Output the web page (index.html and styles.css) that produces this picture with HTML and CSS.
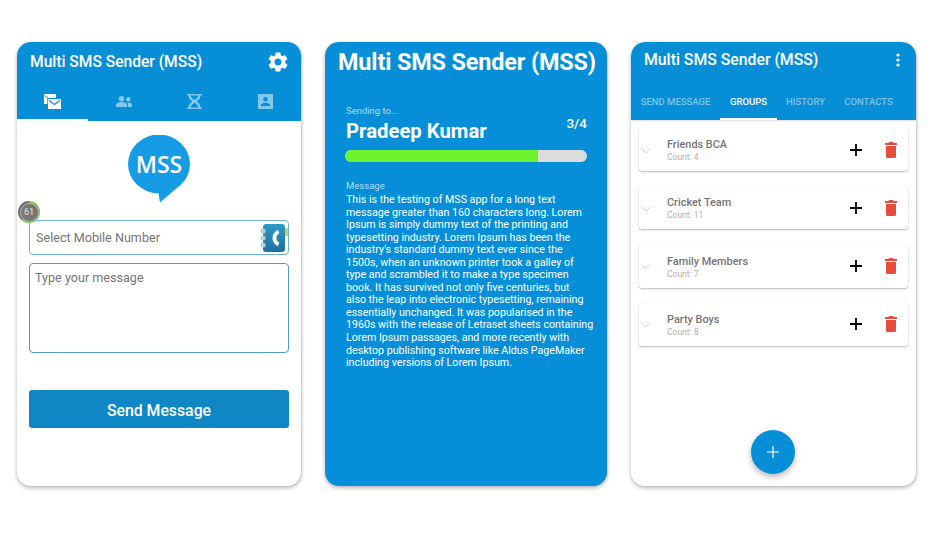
FILE: index.html
```html
<!DOCTYPE html>
<html lang="en">
<head>
<meta charset="utf-8">
<title>Multi SMS Sender (MSS)</title>
<link rel="stylesheet" href="styles.css">
</head>
<body>
<main class="shots">
  <section class="card card-send">
    <header class="appbar appbar-send">
      <div class="titlebar titlebar-send">
        <h1 class="title">Multi SMS Sender (MSS)</h1>
        <svg class="gear" viewBox="2 2 20 20" width="20" height="20"><path fill="#fff" d="M19.14 12.94c.04-.3.06-.61.06-.94 0-.32-.02-.64-.07-.94l2.03-1.58a.49.49 0 0 0 .12-.61l-1.92-3.32a.49.49 0 0 0-.59-.22l-2.39.96c-.5-.38-1.03-.7-1.62-.94l-.36-2.54a.48.48 0 0 0-.48-.41h-3.84c-.24 0-.43.17-.47.41l-.36 2.54c-.59.24-1.13.57-1.62.94l-2.39-.96c-.22-.08-.47 0-.59.22L2.74 8.87c-.12.21-.08.47.12.61l2.03 1.58c-.05.3-.09.63-.09.94s.02.64.07.94l-2.03 1.58a.49.49 0 0 0-.12.61l1.92 3.32c.12.22.37.29.59.22l2.39-.96c.5.38 1.03.7 1.62.94l.36 2.54c.05.24.24.41.48.41h3.84c.24 0 .44-.17.47-.41l.36-2.54c.59-.24 1.13-.56 1.62-.94l2.39.96c.22.08.47 0 .59-.22l1.92-3.32c.12-.22.07-.47-.12-.61l-2.01-1.58zM12 15.6c-1.98 0-3.6-1.62-3.6-3.6s1.62-3.6 3.6-3.6 3.6 1.62 3.6 3.6-1.62 3.6-3.6 3.6z"/></svg>
      </div>
      <nav class="icontabs">
        <div class="icontab icontab-active">
          <svg viewBox="0 0 17 15" width="17" height="15"><path fill="#fff" d="M0 0h12v4.500H4V10H0z"/><path fill="none" stroke="#068fd6" stroke-width="1" d="M.5 1.500 6 5.500"/><path fill="#068fd6" d="M3.300 4h9.700v7H3.300z"/><path fill="#fff" d="M4 5h13v10H4z"/><path fill="none" stroke="#068fd6" stroke-width="1.200" d="M5 6.500l5.500 4 5.500-4"/></svg>
        </div>
        <div class="icontab">
          <svg viewBox="0 0 16 11" width="16" height="11"><g fill="#80c8ee"><circle cx="5.500" cy="2.700" r="2.700"/><path d="M0 11V9c0-2 2.700-3 5.500-3S11 7 11 9v2z"/><circle cx="12.300" cy="3.300" r="2.200"/><path d="M12 6.500c2 0 4 .8 4 2.500v2h-4V9c0-1-.3-1.800-.8-2.400z"/></g></svg>
        </div>
        <div class="icontab">
          <svg viewBox="0 0 15 15" width="15" height="15"><path fill="#80c8ee" d="M0 0h15v1.500h-1.500c0 2.500-1.500 4.700-3.800 6 2.300 1.300 3.800 3.500 3.800 6H15V15H0v-1.500h1.500c0-2.500 1.500-4.700 3.800-6-2.300-1.300-3.800-3.500-3.800-6H0zM3.500 1.500c.5 1.500 2 3.500 4 4.500 2-1 3.500-3 4-4.500zM7.500 9c-2 1-3.300 2.500-3.800 4.500h7.600C10.800 11.500 9.500 10 7.500 9z" fill-rule="evenodd"/></svg>
        </div>
        <div class="icontab">
          <svg viewBox="0 0 15 15" width="15" height="15"><path fill="#80c8ee" fill-rule="evenodd" d="M0 0h15v15H0zM7.500 3a2.300 2.300 0 1 0 0 4.600 2.300 2.300 0 0 0 0-4.600zM3 12h9v-1c0-1.500-3-2.300-4.500-2.300S3 9.500 3 11z"/></svg>
        </div>
      </nav>
    </header>
    <div class="send-body">
      <div class="logo">
        <svg viewBox="0 0 64 70" width="64" height="70"><ellipse cx="31" cy="29" rx="31" ry="29.500" fill="#159ce4"/><path fill="#159ce4" d="M30 55 32 67.500 50 52z"/></svg>
        <span class="logo-text">MSS</span>
      </div>
      <div class="field field-number">
        <span class="placeholder">Select Mobile Number</span>
        <svg class="book" viewBox="0 0 28 30" width="28" height="30"><defs><linearGradient id="bookfill" x1="0" y1="0" x2="0" y2="1"><stop offset="0" stop-color="#2f9ac6"/><stop offset="1" stop-color="#1f6f9f"/></linearGradient></defs><rect x="25" y="5" width="3" height="8" fill="#e8c94a"/><rect x="3" y="1" width="22" height="28" rx="3" fill="url(#bookfill)"/><path fill="#fff" d="M18 7c-3.500 1.300-5.500 4.500-5.500 8s2 6.700 5.500 8l1.300-3.500-2-1.300c-.6-1-.9-2-.9-3.200s.3-2.200.9-3.200l2-1.300z"/><g fill="#b6cfd0"><circle cx="3" cy="8" r="2.600"/><circle cx="3" cy="15" r="2.600"/><circle cx="3" cy="22" r="2.600"/></g></svg>
        <div class="badge"><span>61</span></div>
      </div>
      <div class="field field-message"><span class="placeholder">Type your message</span></div>
      <button class="send-button" type="button">Send Message</button>
    </div>
  </section>

  <section class="card card-progress">
    <h1 class="title title-large">Multi SMS Sender (MSS)</h1>
    <div class="progress-body">
      <div class="recipient-row">
        <div>
          <div class="label">Sending to...</div>
          <div class="recipient">Pradeep Kumar</div>
        </div>
        <div class="counter">3/4</div>
      </div>
      <div class="track"><div class="fill"></div></div>
      <div class="label label-message">Message</div>
      <p class="message">This is the testing of MSS app for a long text<br>message greater than 160 characters long. Lorem<br>Ipsum is simply dummy text of the printing and<br>typesetting industry. Lorem Ipsum has been the<br>industry's standard dummy text ever since the<br>1500s, when an unknown printer took a galley of<br>type and scrambled it to make a type specimen<br>book. It has survived not only five centuries, but<br>also the leap into electronic typesetting, remaining<br>essentially unchanged. It was popularised in the<br>1960s with the release of Letraset sheets containing<br>Lorem Ipsum passages, and more recently with<br>desktop publishing software like Aldus PageMaker<br>including versions of Lorem Ipsum.</p>
    </div>
  </section>

  <section class="card card-groups">
    <header class="appbar appbar-groups">
      <div class="titlebar titlebar-groups">
        <h1 class="title title-groups">Multi SMS Sender (MSS)</h1>
        <svg viewBox="0 0 4 14" width="4" height="14"><g fill="#fff"><circle cx="2" cy="2" r="1.600"/><circle cx="2" cy="7" r="1.600"/><circle cx="2" cy="12" r="1.600"/></g></svg>
      </div>
      <nav class="texttabs">
        <div class="texttab">SEND MESSAGE</div>
        <div class="texttab texttab-active">GROUPS</div>
        <div class="texttab">HISTORY</div>
        <div class="texttab">CONTACTS</div>
      </nav>
    </header>
    <div class="groups">
      <article class="group">
        <svg class="chevron" viewBox="0 0 10 6" width="10" height="6"><path fill="none" stroke="#d4d4d4" d="M.5.5 5 5 9.500.5"/></svg>
        <div class="group-text"><div class="group-name">Friends BCA</div><div class="group-count">Count: 4</div></div>
        <svg class="plus" viewBox="0 0 12 12" width="12" height="12"><path stroke="#000" stroke-width="1.800" d="M6 0v12M0 6h12"/></svg>
        <svg class="trash" viewBox="0 0 12 16" width="12" height="16"><path fill="#e74c3c" d="M4 0h4l.6 1H12v2H0V1h3.400zM1 4h10v10.500a1.500 1.500 0 0 1-1.500 1.500h-7A1.500 1.500 0 0 1 1 14.500z"/></svg>
      </article>
      <article class="group">
        <svg class="chevron" viewBox="0 0 10 6" width="10" height="6"><path fill="none" stroke="#d4d4d4" d="M.5.5 5 5 9.500.5"/></svg>
        <div class="group-text"><div class="group-name">Cricket Team</div><div class="group-count">Count: 11</div></div>
        <svg class="plus" viewBox="0 0 12 12" width="12" height="12"><path stroke="#000" stroke-width="1.800" d="M6 0v12M0 6h12"/></svg>
        <svg class="trash" viewBox="0 0 12 16" width="12" height="16"><path fill="#e74c3c" d="M4 0h4l.6 1H12v2H0V1h3.400zM1 4h10v10.500a1.500 1.500 0 0 1-1.500 1.500h-7A1.500 1.500 0 0 1 1 14.500z"/></svg>
      </article>
      <article class="group">
        <svg class="chevron" viewBox="0 0 10 6" width="10" height="6"><path fill="none" stroke="#d4d4d4" d="M.5.5 5 5 9.500.5"/></svg>
        <div class="group-text"><div class="group-name">Family Members</div><div class="group-count">Count: 7</div></div>
        <svg class="plus" viewBox="0 0 12 12" width="12" height="12"><path stroke="#000" stroke-width="1.800" d="M6 0v12M0 6h12"/></svg>
        <svg class="trash" viewBox="0 0 12 16" width="12" height="16"><path fill="#e74c3c" d="M4 0h4l.6 1H12v2H0V1h3.400zM1 4h10v10.500a1.500 1.500 0 0 1-1.500 1.500h-7A1.500 1.500 0 0 1 1 14.500z"/></svg>
      </article>
      <article class="group">
        <svg class="chevron" viewBox="0 0 10 6" width="10" height="6"><path fill="none" stroke="#d4d4d4" d="M.5.5 5 5 9.500.5"/></svg>
        <div class="group-text"><div class="group-name">Party Boys</div><div class="group-count">Count: 8</div></div>
        <svg class="plus" viewBox="0 0 12 12" width="12" height="12"><path stroke="#000" stroke-width="1.800" d="M6 0v12M0 6h12"/></svg>
        <svg class="trash" viewBox="0 0 12 16" width="12" height="16"><path fill="#e74c3c" d="M4 0h4l.6 1H12v2H0V1h3.400zM1 4h10v10.500a1.500 1.500 0 0 1-1.500 1.500h-7A1.500 1.500 0 0 1 1 14.500z"/></svg>
      </article>
    </div>
    <button class="fab" type="button" aria-label="Add group">
      <svg viewBox="0 0 12 12" width="12" height="12"><path stroke="#fff" stroke-width="1.200" d="M6 0v12M0 6h12"/></svg>
    </button>
  </section>
</main>
</body>
</html>
```

FILE: styles.css
```css
* { box-sizing: border-box; }
html, body { margin: 0; height: 100%; background: #fff; overflow: hidden; }
body { font-family: Roboto, "Liberation Sans", sans-serif; }

.shots { display: flex; gap: 24px; padding: 42px 0 0 17px; }

.card {
  position: relative;
  height: 444px;
  border-radius: 14px;
  background: #fff;
  box-shadow: 0 2px 4px rgba(0, 0, 0, .28), 1px 0 2px rgba(0, 0, 0, .1);
  overflow: hidden;
  flex: none;
}
.card-send { width: 284px; overflow: visible; }
.card-progress { width: 282px; background: #068fd8; }
.card-groups { width: 285px; }

.appbar { background: #068fd6; border-radius: 14px 14px 0 0; display: flex; flex-direction: column; }
.appbar-send { height: 79px; }
.appbar-groups { height: 78px; box-shadow: 0 1px 2px rgba(0, 0, 0, .15); }
.title { margin: 0; font-size: 15.600px; font-weight: 500; color: #fff; line-height: 20px; white-space: nowrap; }
.title-groups { font-size: 15.800px; }
.title-large { font-size: 23.400px; line-height: 30px; padding: 5px 0 0 13px; font-weight: 700; letter-spacing: -.13px; }

.titlebar { display: flex; justify-content: space-between; align-items: center; }
.titlebar-send { padding: 0 13px 0 13px; height: 40px; }
.titlebar-groups { padding: 0 16px 0 13px; height: 36px; }

.icontabs { display: flex; flex: 1; }
.icontab { flex: 1; display: flex; align-items: center; justify-content: center; }
.icontab-active { box-shadow: inset 0 -2px 0 #fff; }

.send-body { position: relative; padding: 14px 12px 0; display: flex; flex-direction: column; }
.logo { position: relative; align-self: center; width: 64px; height: 70px; margin-left: 2px; }
.logo svg { display: block; }
.logo-text { position: absolute; left: 0; right: 2px; top: 13px; text-align: center; font-family: "Open Sans", sans-serif; font-size: 23px; font-weight: 600; line-height: 32px; color: #fff; }

.field { position: relative; background: #fff; border: 1px solid #6eb0d8; border-radius: 4px; color: #757575; font-size: 12.600px; }
.field-number { height: 35px; margin-top: 15px; display: flex; align-items: center; justify-content: space-between; padding: 0 0 0 6px; }
.book { flex: none; margin-right: 0; }
.field-message { height: 90px; margin-top: 8px; padding: 6px 5px; border-color: #4f9cc8; }
.field-message .placeholder { display: block; line-height: 16px; }

.badge {
  position: absolute; left: -12px; top: -20px;
  width: 22px; height: 22px; border-radius: 50%;
  background: conic-gradient(#78c445 0 62%, #6c6c6c 62%);
  display: flex; align-items: center; justify-content: center;
}
.badge span { width: 19px; height: 19px; border-radius: 50%; background: #777; border: 1px solid #b4b4b4; box-shadow: 0 0 0 1px #777 inset; color: #e8e8e8; font-size: 9px; line-height: 17px; text-align: center; }

.send-button {
  margin-top: 37px; height: 38px; width: 100%; padding: 2px 0 0;
  border: 0; border-radius: 3px; background: #0f87c5; color: #fff;
  font: 500 15.800px Roboto, sans-serif;
}

.progress-body { padding: 28px 20px 0 21px; color: #fff; }
.recipient-row { display: flex; justify-content: space-between; align-items: flex-start; }
.label { font-size: 9.500px; line-height: 12px; color: #b5dcf2; }
.recipient { font-size: 20.300px; font-weight: 700; line-height: 28px; }
.counter { font-size: 13.500px; font-weight: 500; line-height: 16px; margin-top: 10px; }
.track { height: 12px; border-radius: 6px; background: #dcdcdc; overflow: hidden; margin-top: 5px; margin-left: -1px; }
.fill { width: 79.800%; height: 100%; border-radius: 6px 0 0 6px; background: #6ef22b; }
.label-message { margin-top: 18px; }
.message { margin: 2px -10px 0 0; font-size: 10.660px; line-height: 12.550px; white-space: nowrap; color: #fff; }

.texttabs { display: flex; height: 42px; padding-top: 4px; }
.texttab { font-size: 9.500px; font-weight: 500; color: #7cc4ea; display: flex; align-items: center; justify-content: center; padding-bottom: 0; white-space: nowrap; }
.texttab:nth-child(1) { width: 89px; }
.texttab:nth-child(2) { width: 57px; }
.texttab:nth-child(3) { width: 57px; }
.texttab:nth-child(4) { width: 69px; }
.texttab-active { color: #fff; box-shadow: inset 0 -2px 0 #fff; margin-top: -4px; padding-top: 4px; }

.groups { padding: 8px 8px 0; display: flex; flex-direction: column; gap: 15.300px; }
.group { height: 43px; background: #fff; border-radius: 3px; box-shadow: 0 1px 2px rgba(0, 0, 0, .28), 0 0 1px rgba(0, 0, 0, .1); display: flex; align-items: center; padding: 0 11px 0 2px; }
.chevron { flex: none; margin-top: 2px; }
.group-text { flex: 1; padding-left: 16px; padding-top: 2px; }
.group-name { font-size: 10.900px; font-weight: 500; line-height: 14px; color: #757575; }
.group-count { font-size: 8.500px; line-height: 12px; color: #b0b0b0; margin-top: -1px; }
.plus { flex: none; margin-right: 23px; }
.trash { flex: none; }

.fab {
  position: absolute; left: 120px; top: 388px;
  width: 44px; height: 44px; border: 0; border-radius: 50%; padding: 0;
  background: #068fd6; box-shadow: 0 3px 6px rgba(0, 0, 0, .28);
  display: flex; align-items: center; justify-content: center;
}
```
